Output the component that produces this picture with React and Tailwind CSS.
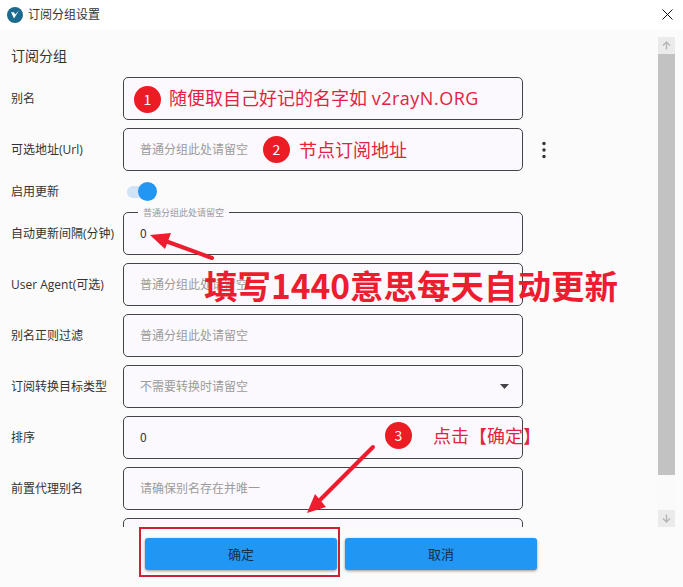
const CJK = "font-['Noto_Sans_CJK_SC','Noto_Sans',sans-serif]";
const LATIN_CJK = "font-['Open_Sans','Noto_Sans_CJK_SC',sans-serif]";

function Field({ value, placeholder, caret, notch }) {
  return (
    <div className="relative flex h-[43px] w-[400px] shrink-0 items-center justify-between rounded-[5px] border border-[#44424a] bg-[#fbf9fd] pb-[2px] pl-[16px] pr-[13px] text-[12px]">
      {notch && (
        <span className="absolute left-[14px] top-[-6px] bg-[#fbf9fd] px-[5px] text-[9px] leading-[12px] text-[#9a9a9a]">
          {notch}
        </span>
      )}
      {value !== undefined ? (
        <span className="text-[#333333]">{value}</span>
      ) : (
        <span className="text-[#9b9b9b]">{placeholder}</span>
      )}
      {caret && (
        <svg className="mt-[2px]" width="9" height="5" viewBox="0 0 9 5">
          <path d="M0 0h9L4.5 5z" fill="#44424a" />
        </svg>
      )}
    </div>
  );
}

function Row({ label, children, tight }) {
  return (
    <div className={`flex shrink-0 items-center ${tight ? "h-[25px]" : "h-[43px]"}`}>
      <div className={`w-[123px] shrink-0 pl-[11px] text-[12px] text-[#333333] ${LATIN_CJK}`}>{label}</div>
      {children}
    </div>
  );
}

function Badge({ n, className }) {
  return (
    <span className={`absolute flex h-[27px] w-[27px] items-center justify-center rounded-full bg-[#ec1c24] text-[14px] text-white ${className}`}>
      {n}
    </span>
  );
}

const PH = "普通分组此处请留空";

export default function App() {
  return (
    <div className={`relative flex h-[587px] w-[683px] flex-col overflow-hidden bg-[#fbfbfb] ${CJK}`}>
      <header className="flex h-[29px] shrink-0 items-center justify-between bg-white pl-[7px] pr-[10px]">
        <div className="flex items-center gap-[5px]">
          <svg width="16" height="16" viewBox="0 0 16 16">
            <circle cx="8" cy="8" r="8" fill="#1c6a8f" />
            <path d="M4 5l3 6.5L12 3.5 8.2 7.5 7.2 5.4z" fill="#ffffff" />
          </svg>
          <span className="pb-[2px] text-[12px] text-[#333333]">订阅分组设置</span>
        </div>
        <svg width="11" height="11" viewBox="0 0 11 11">
          <path d="M.5.5l10 10M10.5.5l-10 10" stroke="#111111" strokeWidth="1" fill="none" />
        </svg>
      </header>

      <div className="flex h-[498px] shrink-0">
        <div className="w-[658px] shrink-0 overflow-hidden pt-[16px]">
          <h2 className="mb-[12px] pl-[11px] text-[14px] font-normal leading-[20px] text-[#333333]">订阅分组</h2>
          <div className="flex flex-col gap-[8px]">
            <Row label="别名"><Field placeholder="" /></Row>
            <Row label="可选地址(Url)">
              <Field placeholder={PH} />
              <svg className="ml-[18px]" width="6" height="18" viewBox="0 0 6 18">
                <circle cx="3" cy="2.5" r="1.7" fill="#333333" />
                <circle cx="3" cy="9" r="1.7" fill="#333333" />
                <circle cx="3" cy="15.5" r="1.7" fill="#333333" />
              </svg>
            </Row>
            <Row label="启用更新" tight>
              <div className="relative ml-[4px] h-[12px] w-[26px] rounded-full bg-[#cfe4f7]">
                <span className="absolute right-[-4px] top-[-4px] h-[19px] w-[19px] rounded-full bg-[#2196f3]" />
              </div>
            </Row>
            <Row label="自动更新间隔(分钟)"><Field value="0" notch={PH} /></Row>
            <Row label="User Agent(可选)"><Field placeholder={PH} /></Row>
            <Row label="别名正则过滤"><Field placeholder={PH} /></Row>
            <Row label="订阅转换目标类型"><Field placeholder="不需要转换时请留空" caret /></Row>
            <Row label="排序"><Field value="0" /></Row>
            <Row label="前置代理别名"><Field placeholder="请确保别名存在并唯一" /></Row>
            <Row label=""><Field placeholder="" /></Row>
          </div>
        </div>

        <div className="mt-[8px] flex h-[490px] w-[17px] shrink-0 flex-col bg-[#fafafa]">
          <div className="flex h-[17px] shrink-0 items-center justify-center bg-[#ebebeb]">
            <svg width="9" height="9" viewBox="0 0 9 9">
              <path d="M4.5 8.5V1M1 4.5L4.5 1 8 4.5" stroke="#b5b5b5" strokeWidth="1.4" fill="none" />
            </svg>
          </div>
          <div className="h-[421px] shrink-0 bg-[#c2c2c2]" />
          <div className="flex-1" />
          <div className="flex h-[17px] shrink-0 items-center justify-center bg-[#ebebeb]">
            <svg width="9" height="9" viewBox="0 0 9 9">
              <path d="M4.5.5V8M1 4.5L4.5 8 8 4.5" stroke="#b5b5b5" strokeWidth="1.4" fill="none" />
            </svg>
          </div>
        </div>
      </div>

      <footer className="flex flex-1 items-start gap-[8px] pl-[145px] pt-[11px]">
        <button className="h-[32px] w-[192px] rounded-[3px] bg-[#2196f3] text-[13px] text-[#10304d] shadow-[0_1px_3px_rgba(0,0,0,0.4)]">确定</button>
        <button className="h-[32px] w-[192px] rounded-[3px] bg-[#2196f3] text-[13px] text-[#10304d] shadow-[0_1px_3px_rgba(0,0,0,0.4)]">取消</button>
      </footer>

      {/* Annotations drawn over the screenshot */}
      <Badge n="1" className="left-[134px] top-[86px]" />
      <span className={`absolute left-[169px] top-[85px] text-[18px] leading-[26px] text-[#e2233f] ${LATIN_CJK}`}>
        随便取自己好记的名字如 <span className="tracking-[0.5px]">v2rayN.ORG</span>
      </span>
      <Badge n="2" className="left-[263px] top-[136px]" />
      <span className="absolute left-[299px] top-[136px] text-[18px] leading-[26px] text-[#e2233f]">节点订阅地址</span>
      <span className="absolute left-[204px] top-[262px] text-[33.5px] font-bold leading-[46px] text-[#ed1c2e]">填写1440意思每天自动更新</span>
      <Badge n="3" className="left-[385px] top-[422px]" />
      <span className="absolute left-[433px] top-[422px] text-[18px] leading-[26px] text-[#e2233f] [text-spacing-trim:space-all]">点击【确定】</span>
      <div className="absolute left-[139px] top-[527px] h-[50px] w-[201px] border-2 border-[#cf1f30]" />

      <svg className="pointer-events-none absolute left-0 top-0" width="683" height="587" viewBox="0 0 683 587">
        <path d="M212 258L160 239" stroke="#ed1c2e" strokeWidth="4" strokeLinecap="round" />
        <path d="M150 235L171 233L165 249z" fill="#ed1c2e" />
        <path d="M373 447L318 502" stroke="#ed1c2e" strokeWidth="4" strokeLinecap="round" />
        <path d="M307 513L315 494L326 507z" fill="#ed1c2e" />
      </svg>
    </div>
  );
}
